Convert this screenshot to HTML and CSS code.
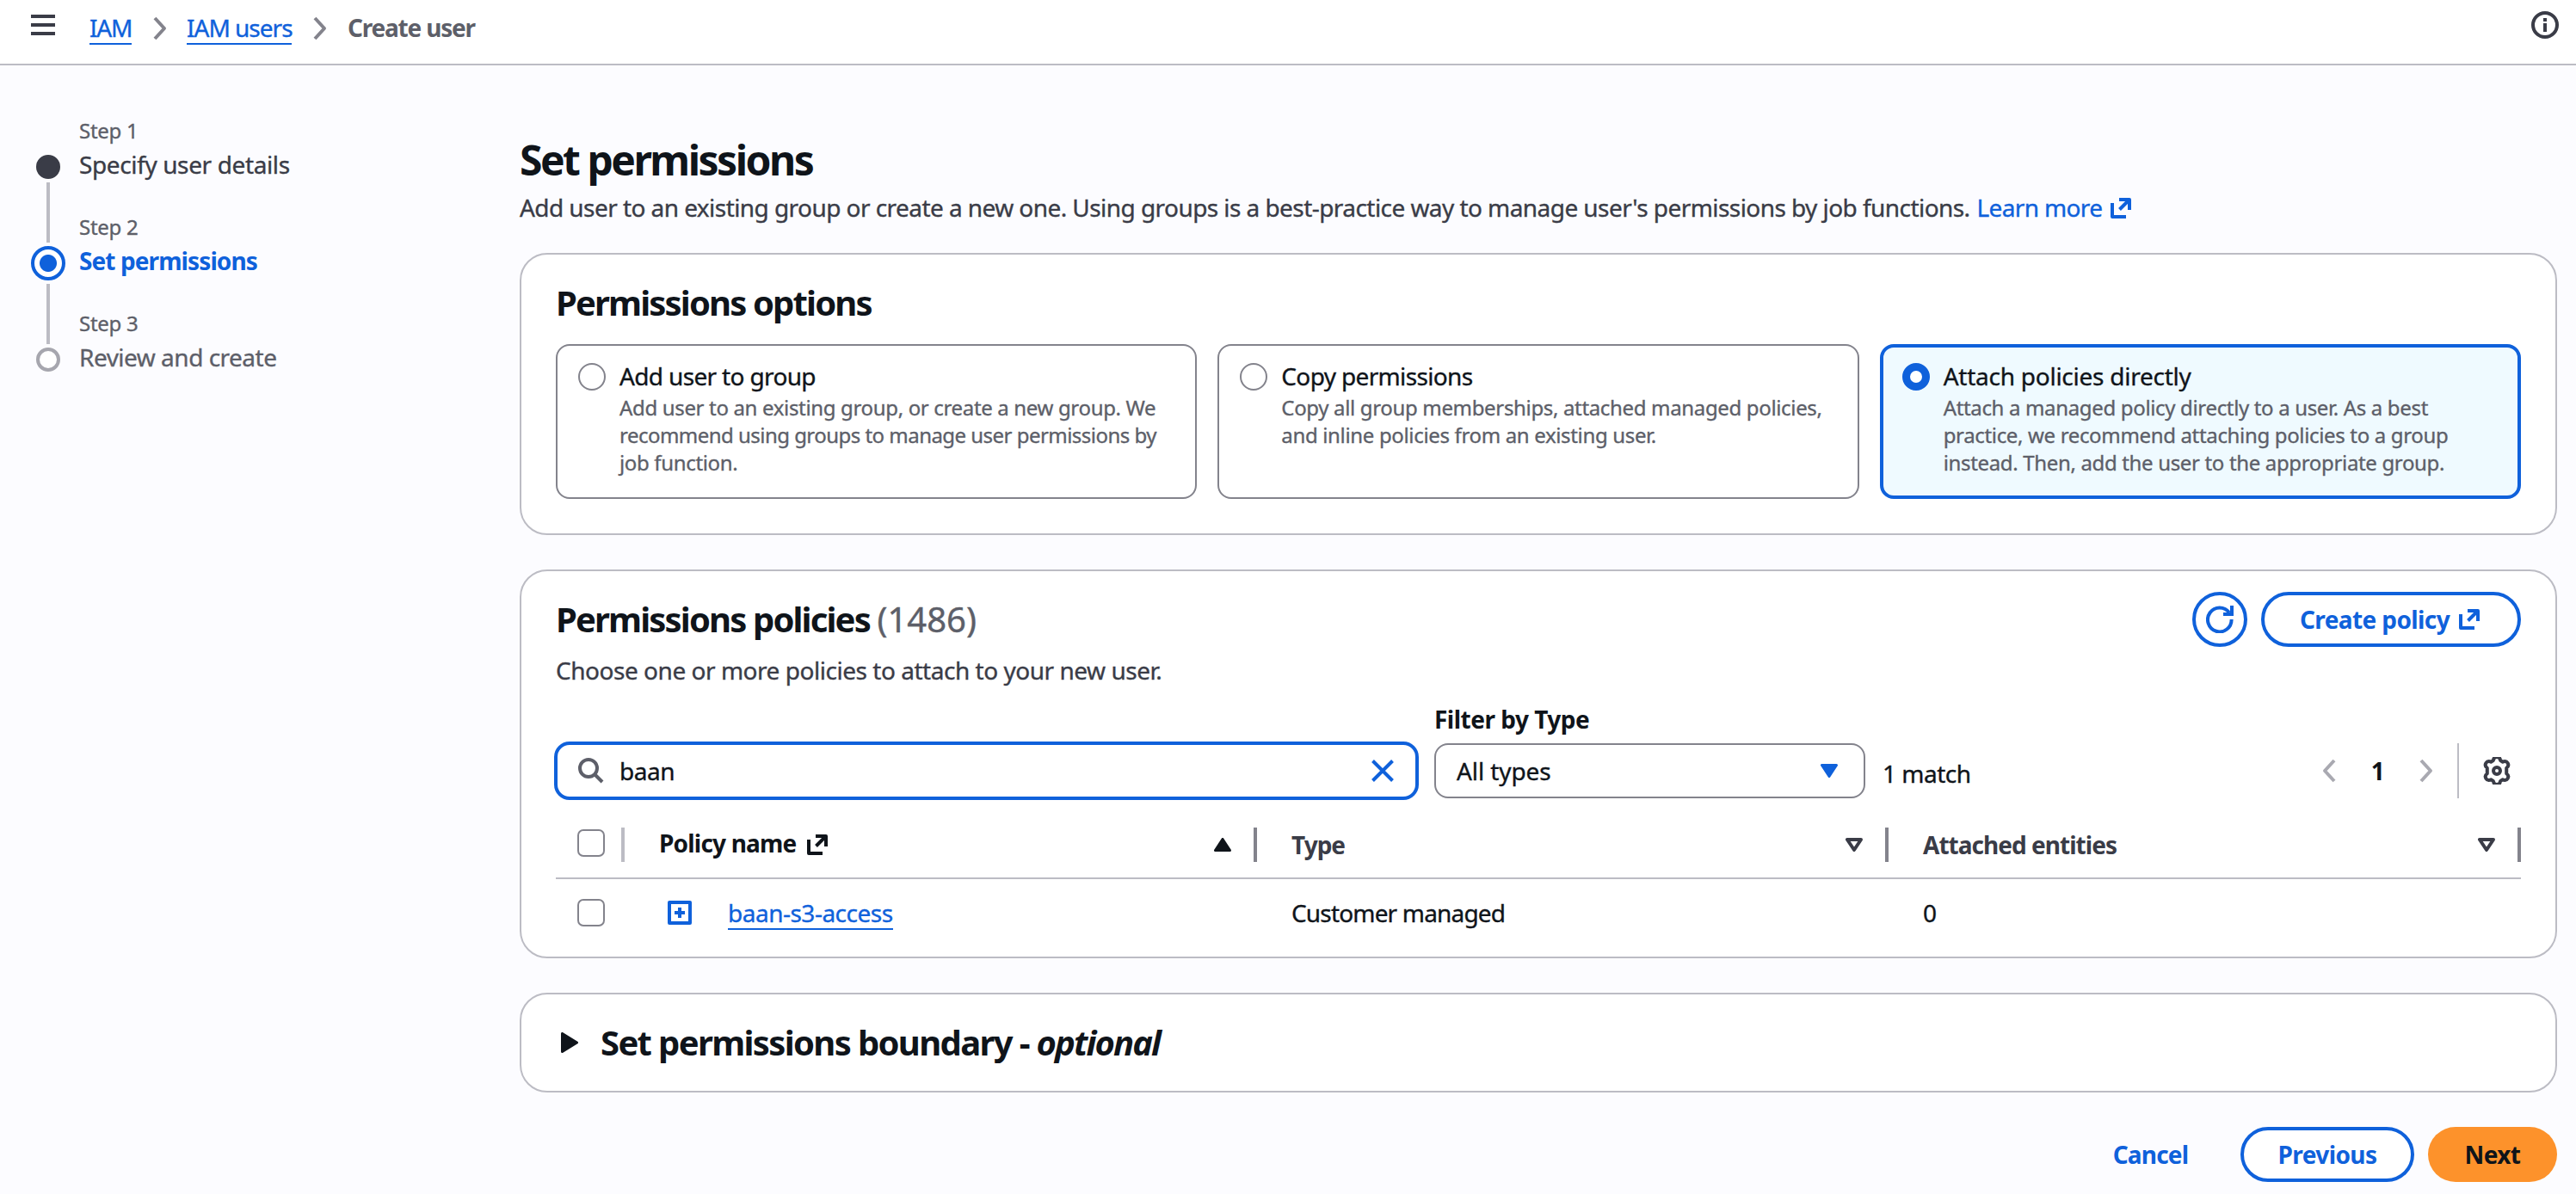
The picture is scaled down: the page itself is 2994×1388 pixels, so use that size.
FILE: index.html
```
<!DOCTYPE html>
<html lang="en">
<head>
<meta charset="utf-8">
<title>Create user | IAM</title>
<link rel="stylesheet" href="styles.css">
</head>
<body>
<svg class="sprite" aria-hidden="true">
  <symbol id="external" viewBox="0 0 24 24"><path d="M2 6V22H18M10 2H22V14M21 3L10.5 13.5" fill="none" stroke="currentColor" stroke-width="4" stroke-linejoin="round"/></symbol>
  <symbol id="next" viewBox="0 0 16 28"><path d="M2 2L13 14L2 26" fill="none" stroke="currentColor" stroke-width="4" stroke-linejoin="round"/></symbol>
  <symbol id="prev" viewBox="0 0 16 28"><path d="M14 2L3 14L14 26" fill="none" stroke="currentColor" stroke-width="4" stroke-linejoin="round"/></symbol>
  <symbol id="sort" viewBox="0 0 20 16"><path d="M2 2H18L10 14Z" fill="none" stroke="currentColor" stroke-width="4" stroke-linejoin="round"/></symbol>
  <symbol id="caret" viewBox="0 0 20 16"><path d="M1.5 1.5H18.5L10 14.5Z" fill="currentColor" stroke="currentColor" stroke-width="3" stroke-linejoin="round"/></symbol>
</svg>

<header class="topbar">
  <svg class="menu" viewBox="0 0 28 24"><path d="M0 2H28M0 12H28M0 22H28" stroke="currentColor" stroke-width="4"/></svg>
  <nav class="crumbs">
    <a class="link crumb-iam">IAM</a>
    <svg class="chevron"><use href="#next"/></svg>
    <a class="link crumb-users">IAM users</a>
    <svg class="chevron"><use href="#next"/></svg>
    <b class="crumb-current">Create user</b>
  </nav>
  <svg class="info" viewBox="0 0 32 32"><circle cx="16" cy="16" r="14" fill="none" stroke="currentColor" stroke-width="4"/><path d="M14 8H18V12H14ZM14 14H18V24H14Z" fill="currentColor"/></svg>
</header>

<div class="layout">
  <ol class="steps">
    <li class="step done">
      <span class="step-no">Step 1</span>
      <span class="rail"><i class="dot"></i></span>
      <span class="step-name">Specify user details</span>
    </li>
    <li class="step active">
      <span class="step-no">Step 2</span>
      <span class="rail"><i class="dot"></i></span>
      <span class="step-name">Set permissions</span>
    </li>
    <li class="step pending">
      <span class="step-no">Step 3</span>
      <span class="rail"><i class="dot"></i></span>
      <span class="step-name">Review and create</span>
    </li>
  </ol>

  <main class="content">
    <h1>Set permissions</h1>
    <p class="intro"><span>Add user to an existing group or create a new one. Using groups is a best-practice way to manage user's permissions by job functions.</span><a class="learn">Learn more</a><svg class="ext"><use href="#external"/></svg></p>

    <section class="card options">
      <h2>Permissions options</h2>
      <div class="tiles">
        <label class="tile">
          <i class="radio"></i>
          <span class="tile-text">
            <span class="tile-title">Add user to group</span>
            <span class="tile-desc">Add user to an existing group, or create a new group. We<br><span class="tight">recommend using groups to manage user permissions by</span><br>job function.</span>
          </span>
        </label>
        <label class="tile">
          <i class="radio"></i>
          <span class="tile-text">
            <span class="tile-title">Copy permissions</span>
            <span class="tile-desc">Copy all group memberships, attached managed policies,<br>and inline policies from an existing user.</span>
          </span>
        </label>
        <label class="tile selected">
          <i class="radio"></i>
          <span class="tile-text">
            <span class="tile-title attach">Attach policies directly</span>
            <span class="tile-desc">Attach a managed policy directly to a user. As a best<br>practice, we recommend attaching policies to a group<br>instead. Then, add the user to the appropriate group.</span>
          </span>
        </label>
      </div>
    </section>

    <section class="card policies">
      <div class="policies-head">
        <h2>Permissions policies <span class="count">(1486)</span></h2>
        <div class="actions">
          <button class="btn round"><svg viewBox="0 0 32 32"><path d="M29.6 16A13.8 14 0 1 1 27 8.2" fill="none" stroke="currentColor" stroke-width="4"/><path d="M20 12V8H28V0H32V12Z" fill="currentColor"/></svg></button>
          <button class="btn create"><span>Create policy</span><svg class="ext"><use href="#external"/></svg></button>
        </div>
      </div>
      <p class="hint">Choose one or more policies to attach to your new user.</p>

      <div class="filters">
        <div class="search">
          <svg class="glass" viewBox="0 0 30 30"><circle cx="12" cy="12" r="10" fill="none" stroke="currentColor" stroke-width="4"/><path d="M19 19L28 28" stroke="currentColor" stroke-width="4"/></svg>
          <span class="query">baan</span>
          <svg class="clear" viewBox="0 0 26 26"><path d="M1.5 1.5L24.500 24.500M24.500 1.500L1.500 24.500" stroke="currentColor" stroke-width="4"/></svg>
        </div>
        <div class="type">
          <b class="type-label">Filter by Type</b>
          <div class="select"><span>All types</span><svg class="tri"><use href="#caret"/></svg></div>
        </div>
        <span class="matches">1 match</span>
        <div class="pager">
          <svg class="chevron"><use href="#prev"/></svg>
          <b class="page">1</b>
          <svg class="chevron"><use href="#next"/></svg>
        </div>
        <div class="prefs"><svg viewBox="0 0 32 32"><path d="M12.600 6.100C13.100 1.500 18.900 1.500 19.400 6.100L21.600 7.400C25.900 5.500 28.800 10.500 25.200 13.300V18.700C28.800 21.500 25.900 26.500 21.600 24.600L19.400 25.900C18.900 30.500 13.100 30.500 12.600 25.900L10.400 24.600C6.100 26.500 3.200 21.500 6.800 18.700V13.300C3.200 10.500 6.100 5.500 10.400 7.400Z" fill="none" stroke="currentColor" stroke-width="3.300" stroke-linejoin="round" transform="translate(16 16) scale(1.220 1.200) translate(-16 -16)"/><circle cx="16" cy="16" r="4" fill="none" stroke="currentColor" stroke-width="4"/></svg></div>
      </div>

      <div class="table">
        <div class="row head">
          <div class="cell check"><i class="box"></i></div>
          <div class="cell sorted"><b class="policy-title">Policy name</b><svg class="ext"><use href="#external"/></svg><svg class="tri up"><use href="#caret"/></svg></div>
          <div class="cell"><b>Type</b><svg class="tri"><use href="#sort"/></svg></div>
          <div class="cell"><b class="entities">Attached entities</b><svg class="tri"><use href="#sort"/></svg></div>
        </div>
        <div class="row">
          <div class="cell check"><i class="box"></i></div>
          <div class="cell name"><svg class="plus" viewBox="0 0 28 28"><path d="M2 2H26V26H2Z" fill="none" stroke="currentColor" stroke-width="4" stroke-linejoin="round"/><path d="M14 8V20M8 14H20" stroke="currentColor" stroke-width="4"/></svg><a class="link policy">baan-s3-access</a></div>
          <div class="cell managed">Customer managed</div>
          <div class="cell">0</div>
        </div>
      </div>
    </section>

    <section class="card boundary">
      <svg class="expand" viewBox="0 0 20 24"><path d="M1.500 1.500V22.500L18.500 12Z" fill="currentColor" stroke="currentColor" stroke-width="3" stroke-linejoin="round"/></svg>
      <h2>Set permissions boundary - <em>optional</em></h2>
    </section>

    <footer class="footer">
      <button class="btn plain">Cancel</button>
      <button class="btn previous">Previous</button>
      <button class="btn primary">Next</button>
    </footer>
  </main>
</div>
</body>
</html>
```
FILE: styles.css
```
:root {
  --blue: #0f61db;
  --ink: #0f141a;
  --body: #3a3c47;
  --muted: #5d5f69;
  --line: #bcbcc4;
  --control: #83838c;
}
* { box-sizing: border-box; }
body {
  margin: 0;
  width: 2994px;
  height: 1388px;
  overflow: hidden;
  background: #fcfcff;
  color: var(--ink);
  font: 28px/40px "Noto Sans", "Open Sans", sans-serif;
  letter-spacing: -.5px;
  white-space: nowrap;
  -webkit-text-stroke: .35px currentColor;
}
h1, h2, b, button, .active .step-name { -webkit-text-stroke: 0; }
h1, h2, p, ol { margin: 0; padding: 0; }
svg { display: block; flex: none; }
.sprite { position: absolute; width: 0; height: 0; }

/* top bar */
.topbar {
  height: 76px;
  display: flex;
  align-items: flex-start;
  padding: 0 20px 0 36px;
  background: #fff;
  border-bottom: 2px solid var(--line);
  color: var(--body);
}
.menu { width: 28px; height: 24px; margin-top: 17px; }
.crumbs { display: flex; flex: 1; padding: 12px 0 0 40px; color: var(--control); }
.crumbs .chevron { margin-top: 7px; }
.link { height: 40px; color: var(--blue); border-bottom: 2px solid var(--blue); }
.crumb-iam { width: 49px; margin-right: 25px; letter-spacing: -1.2px; }
.crumb-users { width: 122px; margin: 0 25px 0 23px; letter-spacing: -1px; }
.crumb-current { margin-left: 24px; color: var(--muted); letter-spacing: -1.200px; }
.chevron { width: 16px; height: 28px; }
.info { width: 32px; height: 32px; margin-top: 13px; }

/* wizard steps */
.layout { display: grid; grid-template-columns: 604px 2368px; }
.steps { list-style: none; padding: 60px 0 0 36px; }
.step { display: grid; grid-template: 35px 77px / 40px 1fr; column-gap: 16px; height: 112px; }
.step-no { grid-column: 2; font-size: 24px; line-height: 32px; color: var(--muted); letter-spacing: -.3px; }
.step-name { color: var(--muted); letter-spacing: -.5px; }
.rail { display: flex; flex-direction: column; align-items: center; padding-top: 9px; }
.dot { width: 28px; height: 28px; border-radius: 50%; border: 4px solid #a6a6ae; background: #fff; flex: none; }
.rail::after { content: ""; flex: none; width: 4px; height: 70px; margin-top: 4px; background: var(--line); }
.done .dot { background: var(--body); border-color: var(--body); }
.done .step-name { color: var(--body); letter-spacing: -.38px; }
.active .rail { padding-top: 3px; }
.active .dot { width: 40px; height: 40px; border: 4px solid var(--blue); background: radial-gradient(circle, var(--blue) 9.500px, #fff 10.500px); }
.active .step-name { color: var(--blue); font-weight: 700; letter-spacing: -.9px; }
.pending .rail::after { display: none; }

/* main column */
.content { padding-top: 80px; }
h1 { font-size: 48px; line-height: 60px; letter-spacing: -2.500px; }
h2 { font-size: 40px; line-height: 48px; letter-spacing: -1.850px; }
.intro { display: flex; margin-top: 5px; color: var(--body); letter-spacing: -.56px; }
.learn { margin-left: 8px; color: var(--blue); letter-spacing: -.65px; }
.ext { width: 24px; height: 24px; }
.intro .ext { margin: 9px 0 0 10px; color: var(--blue); }
.card { background: #fff; border: 2px solid var(--line); border-radius: 32px; padding: 0 40px; }

.options { margin-top: 33px; height: 328px; padding-top: 32px; }
.tiles { display: grid; grid-template-columns: repeat(3, 1fr); gap: 24px; margin-top: 24px; }
.tile { display: flex; height: 180px; border: 2px solid var(--control); border-radius: 16px; padding: 14px 22px; gap: 16px; }
.tile > .radio { margin: 6px 0 0 2px; }
.radio { width: 32px; height: 32px; border-radius: 50%; border: 2px solid var(--control); flex: none; background: #fff; }
.tile-text { display: flex; flex-direction: column; padding-top: 1px; }
.tile-title { letter-spacing: -.65px; }
.tile-title.attach { letter-spacing: -.25px; }
.tile-desc { margin-top: 1px; font-size: 24px; line-height: 32px; color: var(--muted); letter-spacing: -.34px; }
.tight { letter-spacing: -.53px; }
.selected { border: 4px solid var(--blue); background: #effaff; padding: 12px 20px; }
.selected .radio { border: 9px solid var(--blue); }

.policies { margin-top: 40px; height: 452px; padding-top: 24px; }
.policies-head { display: flex; justify-content: space-between; height: 64px; }
.policies-head h2 { padding-top: 8px; }
.count { font-weight: 400; color: var(--muted); letter-spacing: 0; -webkit-text-stroke: .4px currentColor; }
.actions { display: flex; gap: 16px; }
.btn {
  display: flex; align-items: center; justify-content: center;
  height: 64px; padding: 0;
  border: 4px solid var(--blue); border-radius: 32px;
  background: #fff; color: var(--blue);
  font: 700 28px/40px "Noto Sans", "Open Sans", sans-serif;
  letter-spacing: -.6px;
}
.round { width: 64px; }
.round svg { width: 32px; height: 32px; }
.create { width: 302px; gap: 11px; padding-right: 3px; }
.hint { margin-top: 7px; color: var(--body); letter-spacing: -.47px; }

.filters { display: flex; align-items: flex-end; height: 131px; margin: 0 0 0 -2px; }
.search { display: flex; align-items: center; width: 1005px; height: 68px; border: 4px solid var(--blue); border-radius: 18px; padding: 0 25px 0 24px; }
.glass { width: 30px; height: 30px; color: var(--muted); }
.query { flex: 1; margin-left: 18px; }
.clear { width: 26px; height: 26px; color: var(--blue); }
.type { margin: 0 0 2px 18px; }
.type-label { display: block; margin-bottom: 8px; letter-spacing: -.5px; }
.select { display: flex; align-items: center; justify-content: space-between; width: 501px; height: 64px; border: 2px solid var(--control); border-radius: 16px; padding: 0 30px 0 24px; letter-spacing: -.1px; }
.tri { width: 20px; height: 16px; }
.select .tri { color: var(--blue); }
.matches { margin: 0 0 11px 20px; letter-spacing: -.5px; }
.pager { display: flex; align-items: center; height: 64px; margin: 0 28px 2px auto; color: #a9a9b1; }
.page { width: 97px; text-align: center; color: var(--ink); }
.prefs { width: 74px; height: 64px; margin-bottom: 2px; padding: 16px 0 0 28px; border-left: 2px solid var(--line); color: var(--body); }
.prefs svg { width: 32px; height: 32px; }

.table { margin-top: 14px; }
.row { display: grid; grid-template-columns: 80px 735px 734px 735px; align-items: center; height: 78px; }
.row.head { border-bottom: 2px solid var(--line); }
.cell { display: flex; align-items: center; height: 40px; padding-left: 40px; }
.head .cell { padding-right: 26px; border-right: 4px solid var(--control); color: var(--body); letter-spacing: -.97px; }
.head .tri { margin-left: auto; }
.head .cell.check { border-color: var(--line); padding-right: 0; }
.cell.check { padding-left: 25px; }
.box { width: 32px; height: 32px; border: 2px solid var(--control); border-radius: 7px; background: #fff; }
.head .box { margin-top: -4px; }
.head .sorted { color: var(--ink); letter-spacing: -.8px; }
.policy-title { margin-top: -4px; }
.sorted .ext { margin-left: 12px; }
.up { transform: scaleY(-1); }
.name { padding-left: 50px; }
.plus { width: 28px; height: 28px; color: var(--blue); }
.policy { width: 192px; margin-left: 42px; letter-spacing: -.5px; }
.managed { letter-spacing: -.83px; }

.boundary { display: flex; align-items: center; height: 116px; margin-top: 40px; padding-left: 46px; }
.expand { width: 20px; height: 24px; margin-right: 26px; }
.boundary h2 { letter-spacing: -1.650px; }
.boundary em { letter-spacing: -1.900px; }

.footer { display: flex; justify-content: flex-end; margin-top: 40px; }
.plain { width: 165px; margin-right: 22px; border: 0; background: none; letter-spacing: -.8px; }
.previous { width: 202px; margin-right: 16px; }
.primary { width: 150px; border: 0; background: #fd922b; color: var(--ink); }
```
